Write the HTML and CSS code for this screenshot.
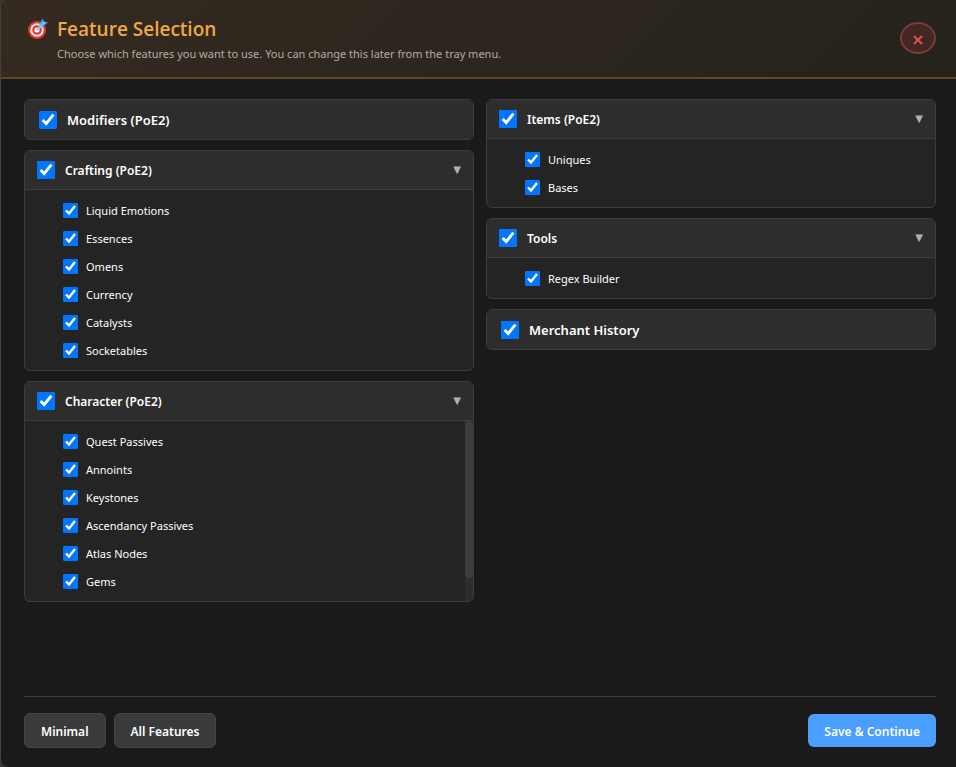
FILE: index.html
```html
<!DOCTYPE html>
<html lang="en">
<head>
<meta charset="utf-8">
<title>Feature Selection</title>
<link rel="stylesheet" href="styles.css">
</head>
<body>
<div class="dialog">
  <header class="header">
    <svg class="logo" viewBox="0 0 22 22" aria-hidden="true">
      <circle cx="11" cy="12" r="9" fill="#e8352f"/>
      <circle cx="11" cy="12" r="6.8" fill="#f7efef"/>
      <circle cx="11" cy="12" r="4.8" fill="#e8352f"/>
      <circle cx="11" cy="12" r="2.6" fill="#f7efef"/>
      <path d="M11 12 17 6" stroke="#6cd8ff" stroke-width="1.8"/>
      <path d="M13 7 16.500 0.500 18 3.500 22 4.500 15.500 9.500Z" fill="#3ea6f2"/>
      <path d="M13 10 18.500 4" stroke="#6fd6ff" stroke-width="1.6"/>
    </svg>
    <div class="heading">
      <h1 class="title">Feature Selection</h1>
      <p class="subtitle">Choose which features you want to use. You can change this later from the tray menu.</p>
    </div>
    <button class="close" type="button" aria-label="Close">
      <svg class="close-icon" viewBox="0 0 10 10" aria-hidden="true"><path d="M1 1 9 9M9 1 1 9"/></svg>
    </button>
  </header>

  <main class="columns">
    <div class="column">
      <section class="card">
        <label class="card-single"><input class="check-large" type="checkbox" checked>Modifiers (PoE2)</label>
      </section>
      <section class="card">
        <div class="card-head">
          <label class="card-label"><input class="check-large" type="checkbox" checked>Crafting (PoE2)</label>
          <span class="arrow">▼</span>
        </div>
        <div class="list">
          <label class="item"><input class="check" type="checkbox" checked>Liquid Emotions</label>
          <label class="item"><input class="check" type="checkbox" checked>Essences</label>
          <label class="item"><input class="check" type="checkbox" checked>Omens</label>
          <label class="item"><input class="check" type="checkbox" checked>Currency</label>
          <label class="item"><input class="check" type="checkbox" checked>Catalysts</label>
          <label class="item"><input class="check" type="checkbox" checked>Socketables</label>
        </div>
      </section>
      <section class="card">
        <div class="card-head">
          <label class="card-label"><input class="check-large" type="checkbox" checked>Character (PoE2)</label>
          <span class="arrow">▼</span>
        </div>
        <div class="scroll-area">
          <div class="list">
            <label class="item"><input class="check" type="checkbox" checked>Quest Passives</label>
            <label class="item"><input class="check" type="checkbox" checked>Annoints</label>
            <label class="item"><input class="check" type="checkbox" checked>Keystones</label>
            <label class="item"><input class="check" type="checkbox" checked>Ascendancy Passives</label>
            <label class="item"><input class="check" type="checkbox" checked>Atlas Nodes</label>
            <label class="item"><input class="check" type="checkbox" checked>Gems</label>
          </div>
          <div class="scroll-track" aria-hidden="true"><div class="scroll-thumb"></div></div>
        </div>
      </section>
    </div>
    <div class="column">
      <section class="card">
        <div class="card-head">
          <label class="card-label"><input class="check-large" type="checkbox" checked>Items (PoE2)</label>
          <span class="arrow">▼</span>
        </div>
        <div class="list">
          <label class="item"><input class="check" type="checkbox" checked>Uniques</label>
          <label class="item"><input class="check" type="checkbox" checked>Bases</label>
        </div>
      </section>
      <section class="card">
        <div class="card-head">
          <label class="card-label"><input class="check-large" type="checkbox" checked>Tools</label>
          <span class="arrow">▼</span>
        </div>
        <div class="list">
          <label class="item"><input class="check" type="checkbox" checked>Regex Builder</label>
        </div>
      </section>
      <section class="card">
        <label class="card-single"><input class="check-large" type="checkbox" checked>Merchant History</label>
      </section>
    </div>
  </main>

  <footer class="footer">
    <button class="button" type="button">Minimal</button>
    <button class="button" type="button">All Features</button>
    <button class="button-primary" type="button">Save &amp; Continue</button>
  </footer>
</div>
</body>
</html>
```
FILE: styles.css
```css
* {
  box-sizing: border-box;
}

body {
  margin: 0;
  background: #35383a;
  color: #fff;
  font-family: "Noto Sans", sans-serif;
  font-size: 12px;
}

.dialog {
  display: flex;
  flex-direction: column;
  min-height: 100vh;
  border-left: 1px solid #3f4142;
  border-radius: 8px 0 0 8px;
  background: #1a1a1a;
  overflow: hidden;
}

.header {
  display: flex;
  align-items: flex-start;
  gap: 9px;
  height: 79px;
  padding: 16px 20px 0 25px;
  border-bottom: 2px solid #5e4726;
  background: linear-gradient(135deg, #342a20, #25221c);
}

.logo {
  width: 22px;
  height: 22px;
  margin-top: 2px;
}

.heading {
  flex: 1;
}

.title {
  margin: 0;
  color: #f0a844;
  font-family: "Open Sans", sans-serif;
  font-size: 19px;
  font-weight: 600;
  line-height: 26px;
}

.subtitle {
  margin: 2px 0 0;
  color: #b0aca6;
  font-size: 11px;
  line-height: 20px;
}

.close {
  display: flex;
  align-items: center;
  justify-content: center;
  width: 36px;
  height: 32px;
  margin-top: 6px;
  padding: 4px 0 0;
  border: 2px solid #803938;
  border-radius: 50%;
  background: #432723;
}

.close-icon {
  width: 10px;
  height: 10px;
  fill: none;
  stroke: #e0524f;
  stroke-width: 2;
}

.columns {
  display: grid;
  flex: 1;
  grid-template-columns: 1fr 1fr;
  align-items: start;
  gap: 12px;
  padding: 20px 20px 20px 23px;
}

.column {
  display: grid;
  gap: 10px;
}

.card {
  border: 1px solid #3d3d3d;
  border-radius: 6px;
  background: #242424;
  overflow: hidden;
}

.card-single,
.card-label {
  display: flex;
  align-items: center;
  gap: 10px;
  font-size: 13px;
  font-weight: 600;
}

.card-single {
  height: 39px;
  padding: 0 14px;
  background: #2d2d2d;
}

.card-head {
  display: flex;
  align-items: center;
  justify-content: space-between;
  height: 39px;
  padding: 0 12px;
  border-bottom: 1px solid #3d3d3d;
  background: #2d2d2d;
}

.card-label {
  font-size: 12px;
}

.arrow {
  padding-bottom: 2px;
  color: #b0b0b0;
  font-family: "DejaVu Sans", sans-serif;
  font-size: 10px;
}

.check,
.check-large {
  flex: none;
  margin: 0;
  accent-color: #0075ff;
}

.check {
  width: 15px;
  height: 15px;
}

.check-large {
  width: 18px;
  height: 18px;
}

.list {
  padding: 6px 0 6px 38px;
}

.scroll-area {
  position: relative;
}

.scroll-track {
  position: absolute;
  top: 0;
  right: 0;
  bottom: 0;
  width: 8px;
  background: #2d2d2d;
}

.scroll-thumb {
  height: 87%;
  border-radius: 4px;
  background: #3d3d3d;
}

.item {
  display: flex;
  align-items: center;
  gap: 8px;
  height: 28px;
  font-size: 11px;
}

.footer {
  display: flex;
  align-items: center;
  gap: 8px;
  margin: 0 20px 0 23px;
  padding: 16px 0 19px;
  border-top: 1px solid #3d3d3d;
}

.button,
.button-primary {
  height: 35px;
  padding: 2px 16px 0;
  border: 1px solid #444;
  border-radius: 6px;
  background: #3a3a3a;
  color: #fff;
  font: inherit;
  font-weight: 600;
}

.button-primary {
  height: 33px;
  margin-left: auto;
  border: 0;
  background: #4a9eff;
}
```
